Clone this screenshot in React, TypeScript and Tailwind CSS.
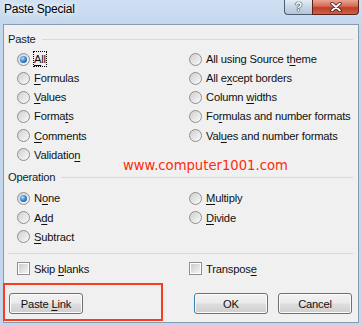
import React from "react";

function L({ t, i }: { t: string; i: number }) {
  return (
    <span className="whitespace-pre">
      {t.slice(0, i)}
      <u className="underline decoration-1 underline-offset-[1.5px]">{t[i]}</u>
      {t.slice(i + 1)}
    </span>
  );
}

function Radio({ checked }: { checked?: boolean }) {
  return (
    <span className="flex h-[13px] w-[13px] shrink-0 items-center justify-center rounded-full border border-[#8f8f8f] bg-[linear-gradient(135deg,#cfcfcf,#fbfbfb)]">
      {checked ? (
        <span className="h-[7px] w-[7px] rounded-full bg-[radial-gradient(circle_at_38%_35%,#b8e4ff_0%,#3a8ad6_45%,#13447f_100%)]" />
      ) : (
        <span className="h-[9px] w-[9px] rounded-full bg-[linear-gradient(135deg,#d2d2d2,#f7f7f7)]" />
      )}
    </span>
  );
}

function Check() {
  return (
    <span className="flex h-[13px] w-[13px] shrink-0 items-center justify-center border border-[#8f8f8f] bg-white">
      <span className="h-[9px] w-[9px] bg-[linear-gradient(135deg,#c9ccd1,#f4f4f4)]" />
    </span>
  );
}

function Opt({
  t,
  i,
  checked,
  focus,
  box,
}: {
  t: string;
  i: number;
  checked?: boolean;
  focus?: boolean;
  box?: boolean;
}) {
  return (
    <div className="flex h-[19.15px] items-center whitespace-nowrap">
      {box ? <Check /> : <Radio checked={checked} />}
      <span
        className={
          focus
            ? "ml-[3px] border border-dotted border-black leading-[14px]"
            : "ml-[4px] leading-[16px]"
        }
      >
        <L t={t} i={i} />
      </span>
    </div>
  );
}

function Header({ label, className }: { label: string; className: string }) {
  return (
    <div className={"flex h-[16px] items-center pl-[4px] pr-[5px] " + className}>
      <span className="leading-[16px] text-[#0f1d2c]">{label}</span>
      <span className="ml-[6px] h-px flex-1 bg-[#d5dadf]" />
    </div>
  );
}

function Btn({
  children,
  def,
}: {
  children: React.ReactNode;
  def?: boolean;
}) {
  return (
    <div
      className={
        "flex h-[21px] w-[74px] items-center justify-center rounded-[3px] border leading-[16px] shadow-[inset_0_0_0_1px_#fbfbfb] bg-[linear-gradient(#f2f2f2_0%,#ebebeb_48%,#dddddd_52%,#cfcfcf_100%)] " +
        (def ? "border-[#3c7fb1]" : "border-[#707070]")
      }
    >
      {children}
    </div>
  );
}

export default function App() {
  return (
    <div className="flex h-[326px] w-[362px] flex-col bg-[#c4d7ed] font-['Liberation_Sans',Arial,sans-serif] text-[11.2px] tracking-[-0.2px] text-[#101010]">
      {/* Title bar */}
      <div className="flex h-[24px] items-start justify-between bg-[linear-gradient(#cfe0f3,#c4d7ed)]">
        <div className="ml-[4px] mt-[1px] text-[12px] leading-[16px] text-black [text-shadow:0_0_6px_#ffffff,0_0_10px_#ffffff]">
          Paste Special
        </div>
        <div className="mr-[3px] flex">
          <div className="flex h-[15px] w-[28px] items-center justify-center rounded-bl-[4px] border border-t-0 border-r-0 border-[#4e5e73] bg-[linear-gradient(#e4ecf5,#c9d6e5_50%,#b4c5d9)] text-[12px] font-bold leading-[12px] text-white [text-shadow:0_0_1px_#2a3340,0_0_1px_#2a3340,0_0_1px_#2a3340]">
            ?
          </div>
          <div className="flex h-[15px] w-[47px] items-center justify-center rounded-br-[4px] border border-t-0 border-[#5a2219] bg-[linear-gradient(#e9a594,#d56a52_45%,#c13d26_55%,#d0604a)]">
            <svg width="12" height="10" viewBox="0 0 12 10">
              <path d="M2 1.5 L10 8.5 M10 1.5 L2 8.5" stroke="#3a1a14" strokeWidth="3.4" strokeLinecap="round" />
              <path d="M2 1.5 L10 8.5 M10 1.5 L2 8.5" stroke="#ffffff" strokeWidth="1.8" strokeLinecap="round" />
            </svg>
          </div>
        </div>
      </div>

      {/* Panel */}
      <div className="relative mx-[3px] flex h-[299px] flex-col border border-[#8a9bb0] bg-[#f0f0f0]">
        <Header label="Paste" className="mt-[6px]" />
        <div className="mt-[2.5px] grid grid-cols-[172px_1fr] pl-[13px]">
          <div className="flex flex-col">
            <Opt t="All" i={0} checked focus />
            <Opt t="Formulas" i={0} />
            <Opt t="Values" i={0} />
            <Opt t="Formats" i={5} />
            <Opt t="Comments" i={0} />
            <Opt t="Validation" i={9} />
          </div>
          <div className="flex flex-col">
            <Opt t="All using Source theme" i={18} />
            <Opt t="All except borders" i={5} />
            <Opt t="Column widths" i={7} />
            <Opt t="Formulas and number formats" i={2} />
            <Opt t="Values and number formats" i={3} />
          </div>
        </div>

        <Header label="Operation" className="mt-[5px]" />
        <div className="mt-[3.5px] grid grid-cols-[172px_1fr] pl-[13px]">
          <div className="flex flex-col">
            <Opt t="None" i={1} checked />
            <Opt t="Add" i={1} />
            <Opt t="Subtract" i={0} />
          </div>
          <div className="flex flex-col">
            <Opt t="Multiply" i={0} />
            <Opt t="Divide" i={0} />
          </div>
        </div>

        <div className="ml-[4px] mr-[5px] mt-[7px] h-px bg-[#d5dadf]" />

        <div className="mt-[5px] grid grid-cols-[172px_1fr] pl-[13px]">
          <Opt t="Skip blanks" i={5} box />
          <Opt t="Transpose" i={8} box />
        </div>

        <div className="mt-[15px] flex pl-[5px] pr-[6px]">
          <Btn>
            <L t="Paste Link" i={6} />
          </Btn>
          <div className="flex-1" />
          <Btn def>OK</Btn>
          <div className="w-[10px]" />
          <Btn>Cancel</Btn>
        </div>

        {/* Watermark overlay */}
        <div className="absolute left-[119px] top-[133px] whitespace-nowrap font-['DejaVu_Sans',sans-serif] text-[13.2px] leading-[16px] tracking-normal text-[#ff2a0a]">
          www.computer1001.com
        </div>

        {/* Red annotation box */}
        <div className="absolute left-[-1px] top-[258px] h-[38px] w-[160px] border-2 border-[#f83c1e]" />
      </div>
    </div>
  );
}
